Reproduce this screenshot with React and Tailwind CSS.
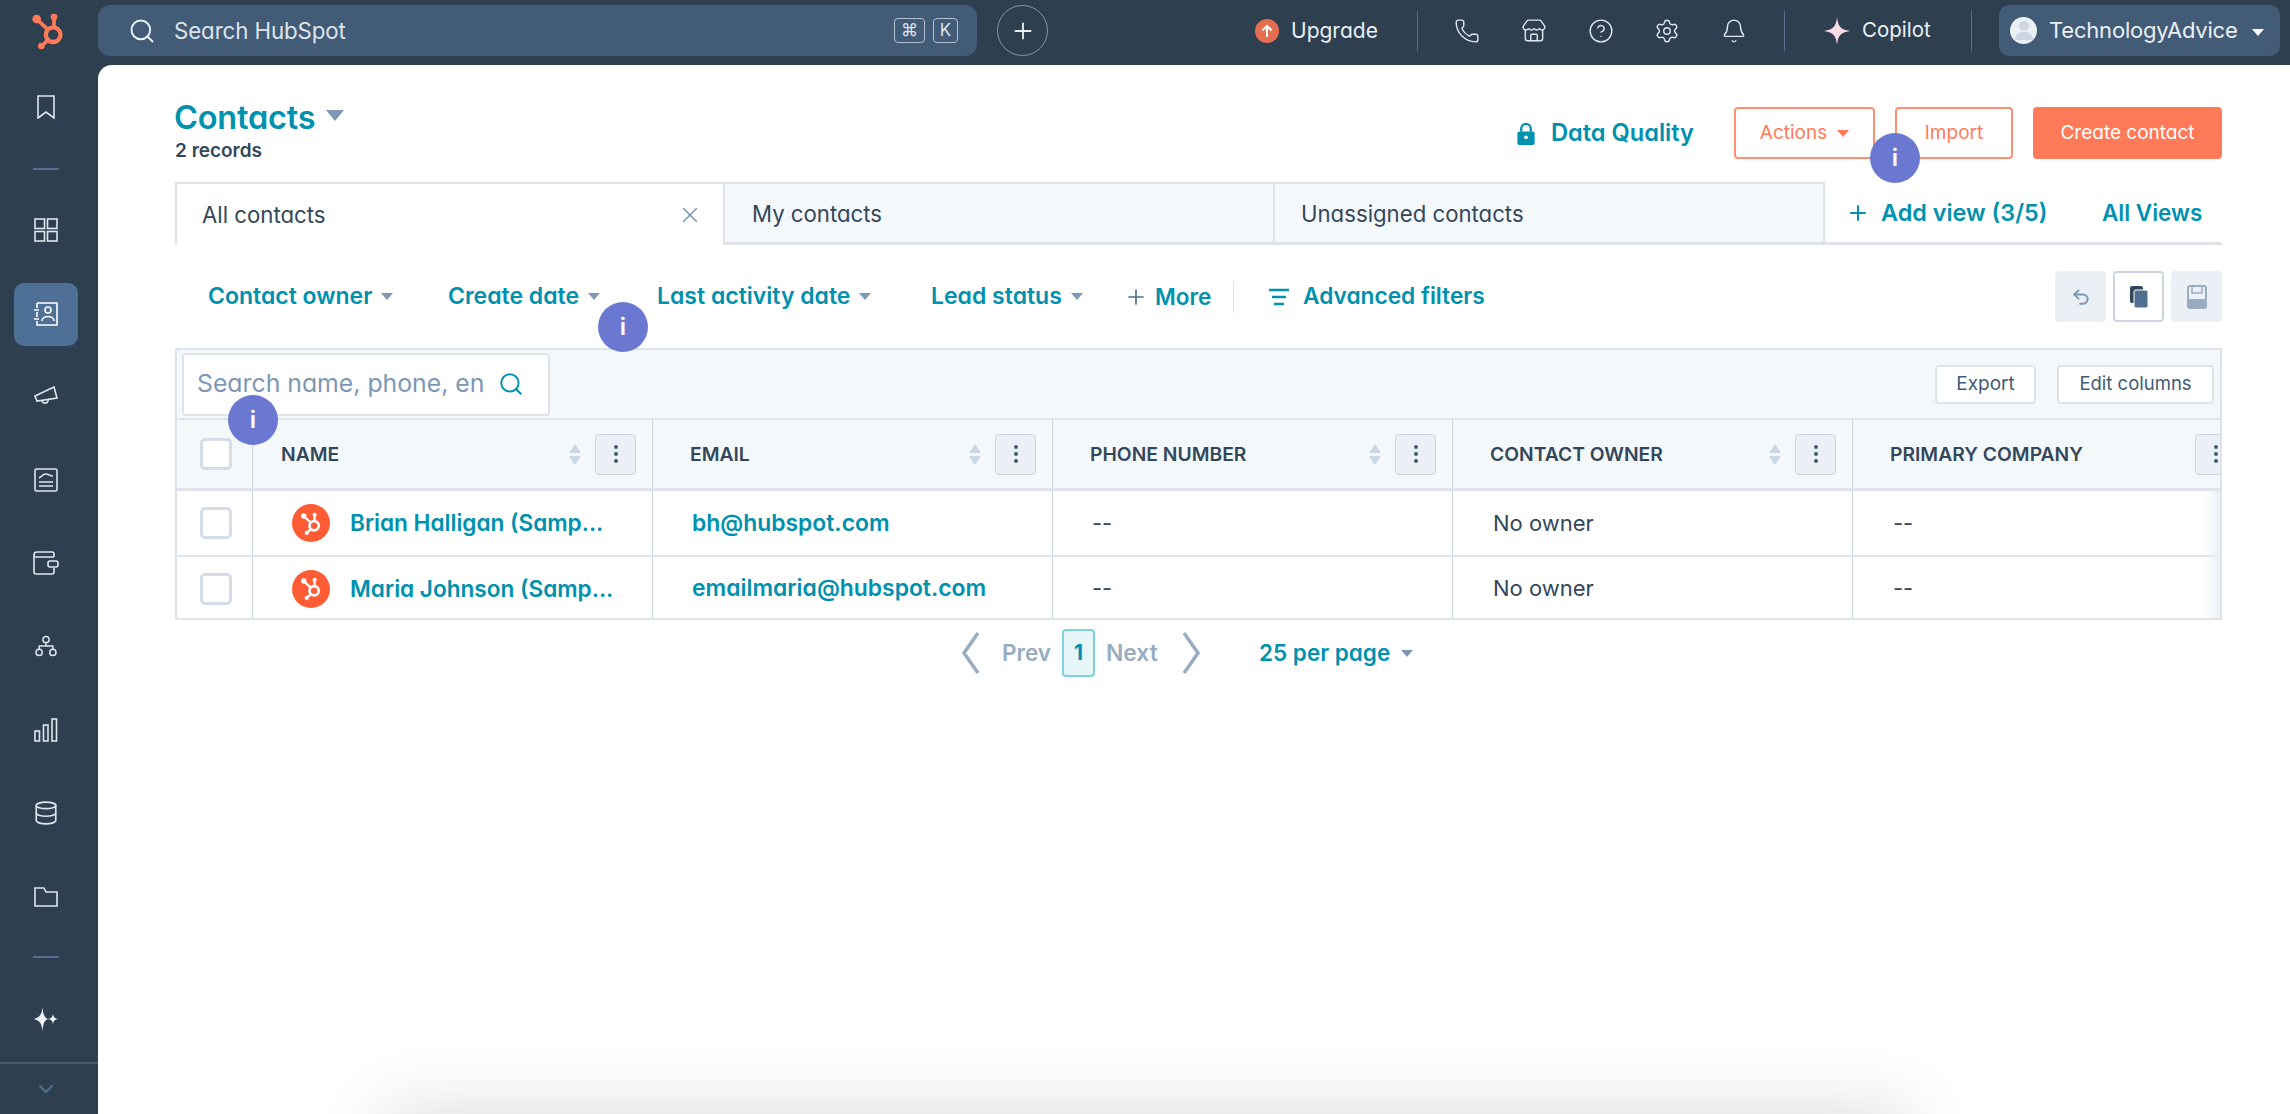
import React from "react";
import { Search, Plus, Phone, Store, CircleHelp, Settings, Bell, X, Undo2, ChevronDown, Database } from "lucide-react";

function Sprocket({ className, color = "currentColor" }) {
  return (
    <svg viewBox="0 0 24 24" className={className} fill="none">
      <circle cx="14.5" cy="14.2" r="4.4" stroke={color} strokeWidth="2.6" />
      <path d="M15 9V4.5M11.4 11.2L5.5 5.8M11.2 17.6L7.8 20.8" stroke={color} strokeWidth="2.2" />
      <circle cx="15" cy="3.6" r="2" fill={color} />
      <circle cx="4.6" cy="4.8" r="2.6" fill={color} />
      <circle cx="7.4" cy="21" r="2" fill={color} />
    </svg>
  );
}

function Caret({ className = "border-t-[#7c98b6]" }) {
  return <span className={`inline-block align-middle w-0 h-0 border-x-[6px] border-x-transparent border-t-[7px] ${className}`} />;
}

function Badge({ className }) {
  return (
    <div className={`absolute w-[50px] h-[50px] rounded-full bg-[#6a78d1] text-white flex items-center justify-center text-[24px] font-semibold ${className}`}>i</div>
  );
}

const navStroke = { fill: "none", stroke: "#dfe6ee", strokeWidth: 1.6 };

function SideIcon({ children, h, active }) {
  return (
    <div className={`flex items-center justify-center ${h}`}>
      {active ? (
        <div className="w-[64px] h-[63px] rounded-[10px] bg-[#4f7096] flex items-center justify-center">{children}</div>
      ) : children}
    </div>
  );
}

function Sidebar() {
  return (
    <aside className="w-[98px] shrink-0 flex flex-col relative pr-[6px]">
      <SideIcon h="h-[84px]">
        <svg viewBox="0 0 18 24" className="w-[18px] h-[24px]" {...navStroke}><path d="M1 1h16v22l-8-6-8 6z" /></svg>
      </SideIcon>
      <div className="h-[2px] w-[26px] bg-[#516f90] ml-[33px] mt-[19px]" />
      <SideIcon h="h-[84px] mt-[18px]">
        <svg viewBox="0 0 24 24" className="w-[24px] h-[24px]" {...navStroke}><rect x="1" y="1" width="9.500" height="9.500" /><rect x="13.500" y="1" width="9.500" height="9.500" /><rect x="1" y="13.500" width="9.500" height="9.500" /><rect x="13.500" y="13.500" width="9.500" height="9.500" /></svg>
      </SideIcon>
      <SideIcon h="h-[84px]" active>
        <svg viewBox="0 0 24 24" className="w-[24px] h-[24px]" fill="none" stroke="#fff" strokeWidth="1.6"><path d="M3 1h20v22H3v-4M3 15v-5M3 6V1M0 8h5M0 17h5" /><circle cx="14" cy="8" r="3" /><path d="M8 19c0-6 12-6 12 0" /></svg>
      </SideIcon>
      <SideIcon h="h-[80px]">
        <svg viewBox="0 0 24 20" className="w-[24px] h-[20px]" {...navStroke}><path d="M1 10L20 1l3 11-20 3z" /><path d="M8 15a3 3 0 1 0 6-2" /></svg>
      </SideIcon>
      <SideIcon h="h-[88px]">
        <svg viewBox="0 0 24 24" className="w-[24px] h-[24px]" {...navStroke}><rect x="1" y="1" width="22" height="22" rx="1.500" /><path d="M5 14h14M5 18h14M5 10c3-1 3-4 7-4 3 0 3 2 7 2" /></svg>
      </SideIcon>
      <SideIcon h="h-[78px]">
        <svg viewBox="0 0 26 24" className="w-[26px] h-[24px]" {...navStroke}><path d="M21 6V3c0-1-1-2-2-2H4C2 1 1 2 1 4v17c0 1 1 2 2 2h16c1 0 2-1 2-2v-4" /><path d="M1 5c0 1 1 1 2 1h18" /><rect x="15" y="10" width="10" height="6" rx="2" /></svg>
      </SideIcon>
      <SideIcon h="h-[88px]">
        <svg viewBox="0 0 24 24" className="w-[22px] h-[22px]" {...navStroke}><circle cx="12" cy="5" r="3.400" /><circle cx="4.500" cy="19" r="3.400" /><circle cx="19.500" cy="19" r="3.400" /><path d="M12 8.500V12M4.500 15.500V12h15v3.500" /></svg>
      </SideIcon>
      <SideIcon h="h-[80px]">
        <svg viewBox="0 0 24 24" className="w-[24px] h-[24px]" {...navStroke}><rect x="1" y="13" width="4.500" height="10" /><rect x="9.500" y="7" width="4.500" height="16" /><rect x="18" y="1" width="4.500" height="22" /></svg>
      </SideIcon>
      <SideIcon h="h-[86px]">
        <Database className="w-[26px] h-[26px]" color="#dfe6ee" strokeWidth={1.5} />
      </SideIcon>
      <SideIcon h="h-[82px]">
        <svg viewBox="0 0 24 20" className="w-[24px] h-[20px]" {...navStroke}><path d="M1 1h9l2 4h11v14H1z" /></svg>
      </SideIcon>
      <div className="h-[2px] w-[26px] bg-[#516f90] ml-[33px] mt-[18px]" />
      <SideIcon h="h-[60px] mt-[31px]">
        <svg viewBox="0 0 26 26" className="w-[26px] h-[26px]" fill="#eef2f6"><path d="M9.500 1c.8 8 2 10.500 5.500 12-3.500 1.500-4.700 4-5.500 12-.8-8-3-10.500-9-12 6-1.500 8.200-4 9-12z" /><path d="M20 7.500c.4 3.500 1.500 5 5.500 5.500-4 .5-5.100 2-5.500 5.500-.4-3.500-1.500-5-5.500-5.500 4-.5 5.100-2 5.500-5.500z" /></svg>
      </SideIcon>
      <div className="mt-[13px] -mr-[6px] border-t-2 border-[#425b76] flex justify-center pt-[13px] pr-[6px]">
        <ChevronDown className="w-[30px] h-[24px]" color="#516f90" strokeWidth={2} />
      </div>
    </aside>
  );
}

function TopBar() {
  const iconCls = "w-[26px] h-[26px]";
  return (
    <header className="h-[65px] flex items-center relative text-white pb-[4px]">
      <div className="w-[98px] shrink-0 flex justify-center">
        <Sprocket className="w-[40px] h-[40px]" color="#ff7a59" />
      </div>
      <div className="w-[879px] h-[51px] rounded-[12px] bg-[#425b76] flex items-center pl-[30px] pr-[19px]">
        <Search className="w-[28px] h-[28px]" color="#eaf0f6" strokeWidth={1.7} />
        <span className="ml-[18px] text-[22.300px] text-[#dfe3eb] tracking-[-0.1px]">Search HubSpot</span>
        <div className="ml-auto flex gap-[8px]">
          <span className="w-[31px] h-[25px] border border-[#b0c1d4] rounded-[4px] flex items-center justify-center text-[17px] text-[#dfe3eb]">⌘</span>
          <span className="w-[25px] h-[25px] border border-[#b0c1d4] rounded-[4px] flex items-center justify-center text-[17px] text-[#dfe3eb]">K</span>
        </div>
      </div>
      <div className="ml-[20px] w-[51px] h-[51px] rounded-full border border-[#7c98b6] flex items-center justify-center">
        <Plus className="w-[26px] h-[26px]" color="#eaf0f6" strokeWidth={1.7} />
      </div>
      <div className="ml-[207px] w-[24px] h-[24px] rounded-full bg-[#e66e50] flex items-center justify-center">
        <svg viewBox="0 0 12 14" className="w-[12px] h-[14px]" fill="none" stroke="#fff" strokeWidth="2"><path d="M6 13V2M1.500 6.500L6 2l4.500 4.500" /></svg>
      </div>
      <span className="ml-[12px] text-[21px] w-[87px] text-[#eaf0f6]">Upgrade</span>
      <div className="ml-[39px] w-px h-[40px] bg-[#516f90]" />
      <div className="ml-[36px] w-[293px] flex justify-between text-[#dfe6ee]">
        <Phone className={iconCls} strokeWidth={1.3} />
        <Store className={iconCls} strokeWidth={1.3} />
        <CircleHelp className={iconCls} strokeWidth={1.3} />
        <Settings className={iconCls} strokeWidth={1.3} />
        <Bell className={iconCls} strokeWidth={1.3} />
      </div>
      <div className="ml-[37px] w-px h-[40px] bg-[#516f90]" />
      <svg viewBox="0 0 26 28" className="ml-[39px] w-[26px] h-[28px]" fill="#fcdce4"><path d="M13 0c1 9 3 12.500 13 14-10 1.500-12 5-13 14-1-9-3-12.500-13-14 10-1.500 12-5 13-14z" /></svg>
      <span className="ml-[12px] text-[20.500px] w-[70px] text-[#eaf0f6]">Copilot</span>
      <div className="ml-[39px] w-px h-[40px] bg-[#516f90]" />
      <div className="ml-[27px] w-[281px] h-[51px] rounded-[10px] bg-[#425b76] flex items-center pl-[11px]">
        <div className="w-[27px] h-[27px] rounded-full bg-[#eaf0f6] flex flex-col items-center justify-center overflow-hidden">
          <div className="w-[10px] h-[10px] rounded-full bg-[#cbd6e2]" />
          <div className="w-[18px] h-[8px] rounded-t-full bg-[#cbd6e2] mt-[1px]" />
        </div>
        <span className="ml-[12px] text-[22px] w-[188px] text-[#eaf0f6] whitespace-nowrap tracking-[-0.2px]">TechnologyAdvice</span>
        <span className="ml-[15px]"><Caret className="border-t-white" /></span>
      </div>
    </header>
  );
}

function Btn({ children, className }) {
  return <div className={`h-[52px] rounded-[4px] flex items-center justify-center text-[19px] ${className}`}>{children}</div>;
}

function FilterItem({ label, className }) {
  return (
    <div className={`flex items-center text-[#0091ae] text-[23px] font-semibold whitespace-nowrap ${className}`}>
      <span>{label}</span>
      <span className="ml-[9px] flex"><Caret /></span>
    </div>
  );
}

function ColHead({ label, pl = "pl-[37px]", sort = true }) {
  return (
    <div className={`w-[400px] shrink-0 h-full border-r border-[#cbd6e2] flex items-center ${pl} pr-[16px]`}>
      <span className="text-[#33475b] text-[19.300px] font-semibold whitespace-nowrap">{label}</span>
      <div className="ml-auto flex items-center gap-[14px]">
        {sort && (
          <div className="flex flex-col gap-[3px]">
            <span className="w-0 h-0 border-x-[6px] border-x-transparent border-b-[9px] border-b-[#cbd6e2]" />
            <span className="w-0 h-0 border-x-[6px] border-x-transparent border-t-[9px] border-t-[#cbd6e2]" />
          </div>
        )}
        <div className="w-[41px] h-[41px] bg-[#eaf0f6] border border-[#cbd6e2] rounded-[4px] flex flex-col items-center justify-center gap-[3px]">
          <span className="w-[4px] h-[4px] rounded-full bg-[#425b76]" />
          <span className="w-[4px] h-[4px] rounded-full bg-[#425b76]" />
          <span className="w-[4px] h-[4px] rounded-full bg-[#425b76]" />
        </div>
      </div>
    </div>
  );
}

function Row({ name, email, h, last }) {
  const cell = "w-[400px] shrink-0 h-full border-r border-[#cbd6e2] flex items-center whitespace-nowrap";
  return (
    <div className={`flex ${h} ${last ? "" : "border-b-2 border-[#dfe3eb]"}`}>
      <div className="w-[76px] shrink-0 h-full border-r border-[#cbd6e2] flex items-center pl-[23px]">
        <div className="w-[32px] h-[32px] rounded-[5px] border-[3px] border-[#d5dee8] bg-white" />
      </div>
      <div className={`${cell} pl-[39px]`}>
        <div className="w-[38px] h-[38px] rounded-full bg-[#ff5c35] flex items-center justify-center">
          <Sprocket className="w-[25px] h-[25px]" color="#fff" />
        </div>
        <span className="ml-[20px] text-[#0091ae] text-[22.600px] font-semibold">{name}</span>
      </div>
      <div className={`${cell} pl-[39px] text-[#0091ae] text-[22.900px] font-semibold`}>{email}</div>
      <div className={`${cell} pl-[39px] text-[#33475b] text-[22px]`}>--</div>
      <div className={`${cell} pl-[40px] text-[#33475b] text-[22px]`}>No owner</div>
      <div className={`${cell} pl-[40px] text-[#33475b] text-[22px] border-r-0`}>--</div>
    </div>
  );
}

export default function App() {
  return (
    <div className="relative w-[2290px] h-[1114px] overflow-hidden bg-[#2e3f50] [font-family:Inter,'Liberation_Sans',sans-serif] [font-feature-settings:'cv11'] text-[#33475b]">
      <TopBar />
      <div className="flex h-[1049px]">
        <Sidebar />
        <main className="flex-1 bg-white rounded-tl-[14px] pl-[77px] pr-[68px] pt-[31px] relative overflow-hidden">
          <div className="flex justify-between h-[66px]">
            <div>
              <div className="flex items-center h-[44px]">
                <h1 className="text-[32.500px] font-semibold text-[#0091ae] leading-none tracking-[-0.2px] -ml-[1px]">Contacts</h1>
                <span className="ml-[11px] w-0 h-0 border-x-[9px] border-x-transparent border-t-[11px] border-t-[#7c98b6] -translate-y-[3px]" />
              </div>
              <div className="text-[19px] font-semibold leading-[22px] text-[#33475b]">2 records</div>
            </div>
            <div className="flex items-center h-[52px] mt-[11px]">
              <svg viewBox="0 0 20 24" className="w-[20px] h-[23px]"><path d="M5 10V7a5 5 0 0 1 10 0v3" fill="none" stroke="#0091ae" strokeWidth="2.400" /><rect x="1" y="10" width="18" height="14" rx="2" fill="#0091ae" /><circle cx="10" cy="16" r="2" fill="#fff" /></svg>
              <span className="ml-[15px] mr-[40px] w-[143px] text-[23.600px] font-semibold text-[#0091ae] whitespace-nowrap">Data Quality</span>
              <Btn className="w-[141px] border-2 border-[#ff8f73] text-[#ff7a59] gap-[10px]">Actions <Caret className="border-t-[#ff7a59]" /></Btn>
              <Btn className="ml-[20px] w-[118px] border-2 border-[#ff8f73] text-[#ff7a59]">Import</Btn>
              <Btn className="ml-[20px] w-[189px] bg-[#ff7a59] text-white">Create contact</Btn>
            </div>
          </div>
          <div className="mt-[20px] h-[63px] flex border-b-[3px] border-[#dfe3eb] text-[22.200px]">
            <div className="w-[550px] h-[63px] bg-white border-t-2 border-l-2 border-r-2 border-[#dfe3eb] flex items-center pl-[25px] pr-[20px] relative z-10">
              <span>All contacts</span>
              <X className="ml-auto w-[26px] h-[26px]" color="#7c98b6" strokeWidth={1.5} />
            </div>
            <div className="w-[550px] bg-[#f5f8fa] border-t-2 border-r-2 border-[#dfe3eb] flex items-center pl-[27px] pt-[2px]">My contacts</div>
            <div className="w-[550px] bg-[#f5f8fa] border-t-2 border-r-2 border-[#dfe3eb] flex items-center pl-[26px] pt-[2px]">Unassigned contacts</div>
            <div className="flex items-center pl-[21px] text-[#0091ae] font-semibold text-[23.400px] whitespace-nowrap pt-[2px]">
              <Plus className="w-[24px] h-[24px]" strokeWidth={2} />
              <span className="ml-[11px] w-[165px]">Add view (3/5)</span>
              <span className="ml-[56px] text-[22.500px]">All Views</span>
            </div>
          </div>
          <div className="mt-[26px] h-[51px] flex items-center">
            <FilterItem label="Contact owner" className="ml-[33px] w-[240px]" />
            <FilterItem label="Create date" className="w-[209px]" />
            <FilterItem label="Last activity date" className="w-[274px]" />
            <FilterItem label="Lead status" className="w-[196px]" />
            <Plus className="w-[24px] h-[24px] -ml-[3px]" color="#516f90" strokeWidth={1.7} />
            <span className="ml-[7px] w-[57px] text-[#0091ae] text-[22.500px] font-semibold">More</span>
            <div className="ml-[21px] w-px h-[32px] bg-[#dfe3eb]" />
            <svg viewBox="0 0 20 18" className="ml-[35px] w-[20px] h-[18px]" fill="none" stroke="#0091ae" strokeWidth="2.400"><path d="M0 2h20M3 9h14M5 16h10" /></svg>
            <span className="ml-[14px] text-[#0091ae] text-[22.700px] font-semibold">Advanced filters</span>
            <div className="ml-auto flex gap-[7px]">
              <div className="w-[51px] h-[51px] rounded-[4px] bg-[#eaf0f6] flex items-center justify-center">
                <Undo2 className="w-[20px] h-[20px]" color="#7c98b6" strokeWidth={2.400} />
              </div>
              <div className="w-[51px] h-[51px] rounded-[4px] bg-white border-2 border-[#cbd6e2] flex items-center justify-center">
                <svg viewBox="0 0 18 22" className="w-[18px] h-[22px]"><rect x="0" y="0" width="13" height="17" rx="2" fill="#33475b" /><rect x="4" y="4" width="14" height="18" rx="2" fill="#516f90" stroke="#fff" /></svg>
              </div>
              <div className="w-[51px] h-[51px] rounded-[4px] bg-[#eaf0f6] flex items-center justify-center">
                <svg viewBox="0 0 20 24" className="w-[20px] h-[24px]"><path d="M1 3a2 2 0 0 1 2-2h14a2 2 0 0 1 2 2v18a2 2 0 0 1-2 2H3a2 2 0 0 1-2-2z" fill="none" stroke="#99acc2" strokeWidth="2" /><path d="M5 1v7h10V1" fill="none" stroke="#99acc2" strokeWidth="1.500" /><rect x="2" y="14" width="16" height="8" fill="#99acc2" /></svg>
              </div>
            </div>
          </div>
          <div className="mt-[26px] h-[272px] border-2 border-[#dfe3eb] relative overflow-hidden">
            <div className="h-[70px] bg-[#f5f8fa] flex items-center pl-[5px] pr-[6px] border-b-2 border-[#dfe3eb]">
              <div className="w-[368px] h-[63px] bg-white border-2 border-[#dfe3eb] rounded-[4px] flex items-center pl-[13px]">
                <span className="text-[#7c98b6] text-[24.800px] whitespace-nowrap w-[301px] overflow-hidden">Search name, phone, en</span>
                <Search className="w-[26px] h-[26px]" color="#0091ae" strokeWidth={1.8} />
              </div>
              <div className="ml-auto flex gap-[21px] text-[#425b76]">
                <div className="w-[101px] h-[39px] bg-white border-2 border-[#dfe3eb] rounded-[4px] flex items-center justify-center text-[19px]">Export</div>
                <div className="w-[157px] h-[39px] bg-white border-2 border-[#dfe3eb] rounded-[4px] flex items-center justify-center text-[18.500px]">Edit columns</div>
              </div>
            </div>
            <div className="h-[71px] bg-[#f5f8fa] flex border-b-[3px] border-[#dfe3eb]">
              <div className="w-[76px] shrink-0 h-full border-r border-[#cbd6e2] flex items-center pl-[23px]">
                <div className="w-[32px] h-[32px] rounded-[5px] border-[3px] border-[#d5dee8] bg-white" />
              </div>
              <ColHead label="NAME" pl="pl-[28px]" />
              <ColHead label="EMAIL" />
              <ColHead label="PHONE NUMBER" />
              <ColHead label="CONTACT OWNER" />
              <ColHead label="PRIMARY COMPANY" sort={false} />
            </div>
            <Row name="Brian Halligan (Samp..." email="bh@hubspot.com" h="h-[66px]" />
            <Row name="Maria Johnson (Samp..." email="emailmaria@hubspot.com" h="h-[63px]" last />
            <div className="absolute right-0 top-[141px] bottom-0 w-[16px] bg-gradient-to-l from-[#eaf0f6] to-transparent" />
          </div>
          <div className="ml-[785px] mt-[9px] h-[48px] flex items-center whitespace-nowrap">
            <svg viewBox="0 0 21 44" className="w-[21px] h-[44px]" fill="none" stroke="#99acc2" strokeWidth="3.500"><path d="M18 2L4 22l14 20" /></svg>
            <span className="ml-[21px] w-[60px] text-[#99acc2] text-[22.500px] font-semibold">Prev</span>
            <div className="w-[33px] h-[48px] bg-[#e5f5f8] border-2 border-[#7fd1de] rounded-[4px] flex items-center justify-center text-[#0091ae] text-[21px] font-bold">1</div>
            <span className="ml-[11px] w-[54px] text-[#99acc2] text-[22.800px] font-semibold">Next</span>
            <svg viewBox="0 0 21 44" className="ml-[21px] w-[21px] h-[44px]" fill="none" stroke="#99acc2" strokeWidth="3.500"><path d="M3 2l14 20L3 42" /></svg>
            <span className="ml-[57px] text-[#0091ae] text-[22.500px] font-semibold">25 per page</span>
            <span className="ml-[11px] flex"><Caret /></span>
          </div>
          <div className="absolute left-[310px] right-[405px] -bottom-[40px] h-[20px] shadow-[0_0_70px_25px_rgba(0,0,0,0.14)]" />
        </main>
      </div>
      <Badge className="left-[1870px] top-[133px]" />
      <Badge className="left-[598px] top-[302px]" />
      <Badge className="left-[228px] top-[395px]" />
    </div>
  );
}
